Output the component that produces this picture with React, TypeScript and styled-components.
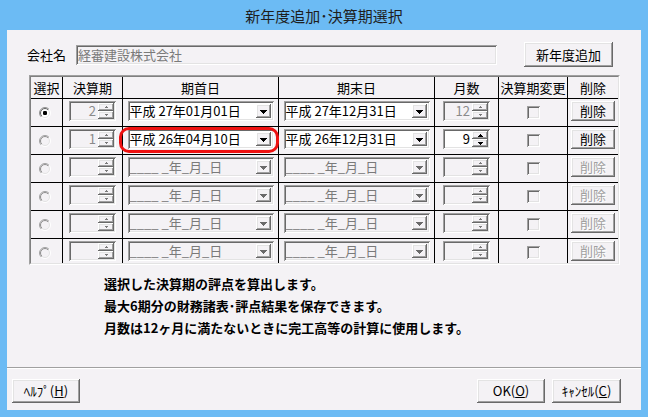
import React from 'react';
import styled, { createGlobalStyle } from 'styled-components';

const FACE = '#F4F2F5';
const BLUE = '#6CBBF4';

const raised = `box-shadow: inset -1px -1px #696969, inset 1px 1px #ffffff, inset -2px -2px #a0a0a0, inset 2px 2px #e3e3e3;`;
const sunken = `box-shadow: inset 1px 1px #a0a0a0, inset -1px -1px #ffffff, inset 2px 2px #696969, inset -2px -2px #e3e3e3;`;

const GlobalStyle = createGlobalStyle`
  html, body { margin: 0; padding: 0; }
  body {
    width: 648px;
    height: 417px;
    overflow: hidden;
    background: ${BLUE};
    font-family: "Noto Sans CJK JP", "Noto Sans", sans-serif;
  }
  * { box-sizing: border-box; }
`;

const Window = styled.div`
  width: 648px;
  height: 417px;
  background: ${BLUE};
  display: flex;
  flex-direction: column;
  padding: 0 7px 7px;
`;

const TitleBar = styled.div`
  height: 30px;
  display: flex;
  align-items: center;
  justify-content: center;
  font-size: 15px;
  color: #1e1e1e;
  padding-top: 1px;
`;

const Client = styled.div`
  flex: 1;
  background: ${FACE};
  display: flex;
  flex-direction: column;
  font-size: 13px;
  color: #000;
`;

const CompanyRow = styled.div`
  display: flex;
  align-items: center;
  height: 25px;
  margin-top: 12px;
  padding-left: 20px;
`;

const Label = styled.span`
  width: 49px;
  font-size: 13px;
  line-height: 16px;
`;

const TextField = styled.div`
  width: 421px;
  height: 20px;
  ${sunken}
  padding: 2px 2px;
  font-size: 13px;
  line-height: 16px;
  color: #7a7a7a;
  white-space: nowrap;
`;

const PushButton = styled.button<{ $w: number; $h: number; $off?: boolean }>`
  width: ${(p) => p.$w}px;
  height: ${(p) => p.$h}px;
  border: none;
  padding: 0;
  margin: 0;
  background: ${FACE};
  ${raised}
  font-family: inherit;
  font-size: 13px;
  line-height: 16px;
  color: ${(p) => (p.$off ? '#a0a0a0' : '#000')};
  text-shadow: ${(p) => (p.$off ? '1px 1px #ffffff' : 'none')};
  display: flex;
  align-items: center;
  justify-content: center;
  white-space: nowrap;
`;

const AddButton = styled(PushButton)`
  margin-left: 27px;
`;

const GridFrame = styled.div`
  margin: 8px 0 0 22px;
  width: 591px;
  height: 190px;
  border: 1px solid;
  border-color: #a0a0a0 #ffffff #ffffff #a0a0a0;
`;

const GridViewport = styled.div`
  position: relative;
  height: 188px;
  border: 1px solid;
  border-color: #808080 #e3e3e3 #e3e3e3 #808080;
  overflow: hidden;
`;

const Grid = styled.div`
  display: grid;
  grid-template-columns: 32px 60px 156px 156px 64px 69px 50px;
  grid-template-rows: 22px;
  grid-auto-rows: 28px;
`;

const HeadCell = styled.div<{ $last?: boolean }>`
  border-right: ${(p) => (p.$last ? 'none' : '1px solid #000')};
  border-bottom: 1px solid #000;
  display: flex;
  align-items: center;
  justify-content: center;
  font-size: 13px;
  line-height: 16px;
  white-space: nowrap;
`;

const Cell = styled.div<{ $last?: boolean; $shift?: number }>`
  border-right: ${(p) => (p.$last ? 'none' : '1px solid #000')};
  border-bottom: 1px solid #000;
  display: flex;
  align-items: flex-start;
  justify-content: center;
  padding-top: 2px;
  padding-right: ${(p) => p.$shift ?? 0}px;
`;

const RadioSvg = styled.svg`
  margin-top: 6px;
  display: block;
`;

const CheckBox = styled.span`
  display: block;
  width: 13px;
  height: 13px;
  margin-top: 5px;
  background: ${FACE};
  ${sunken}
`;

const SpinBox = styled.div<{ $on?: boolean }>`
  width: 47px;
  height: 20px;
  ${sunken}
  background: ${(p) => (p.$on ? '#ffffff' : FACE)};
  padding: 2px;
  display: flex;
`;

const SpinText = styled.span<{ $on?: boolean }>`
  flex: 1;
  text-align: right;
  padding-right: 2px;
  font-size: 13px;
  line-height: 16px;
  color: ${(p) => (p.$on ? '#000' : '#8a8a8a')};
`;

const SpinColumn = styled.div`
  width: 16px;
  display: flex;
  flex-direction: column;
`;

const SpinBtn = styled.div`
  flex: 1;
  background: ${FACE};
  ${raised}
  display: flex;
  align-items: center;
  justify-content: center;
`;

const Combo = styled.div<{ $on?: boolean }>`
  width: 146px;
  height: 20px;
  ${sunken}
  background: ${(p) => (p.$on ? '#ffffff' : FACE)};
  padding: 2px;
  display: flex;
  align-items: center;
`;

const ComboText = styled.span<{ $on?: boolean }>`
  flex: 1;
  font-size: 13px;
  line-height: 16px;
  white-space: nowrap;
  color: ${(p) => (p.$on ? '#000' : '#7a7a7a')};
`;

const DropBtn = styled.div`
  width: 15px;
  height: 14px;
  margin-right: 1px;
  background: ${FACE};
  ${raised}
  display: flex;
  align-items: center;
  justify-content: center;
  padding-top: 1px;
`;

const RedMark = styled.div`
  position: absolute;
  left: 88px;
  top: 50px;
  width: 160px;
  height: 26px;
  border: 3px solid #ee1111;
  border-radius: 10px;
  pointer-events: none;
`;

const Notes = styled.div`
  margin-top: 8px;
  padding-left: 97px;
  font-size: 13px;
  font-weight: 700;
  line-height: 22px;
`;

const Separator = styled.div`
  margin-top: auto;
  height: 2px;
  border-top: 1px solid #a0a0a0;
  border-bottom: 1px solid #ffffff;
`;

const Footer = styled.div`
  display: flex;
  align-items: center;
  height: 24px;
  margin: 10px 20px 7px 5px;
  gap: 7px;
`;

const Spacer = styled.div`
  flex: 1;
`;

const U = styled.span`
  text-decoration: underline;
  text-underline-offset: 1px;
`;

function Radio({ checked, id }: { checked?: boolean; id: string }) {
  const o1 = checked ? '#909090' : '#a0a0a0';
  const i1 = checked ? '#606060' : '#8c8c8c';
  return (
    <RadioSvg width="12" height="12" viewBox="0 0 12 12">
      <defs>
        <linearGradient id={`${id}o`} x1="0" y1="0" x2="1" y2="1">
          <stop offset="0.5" stopColor={o1} />
          <stop offset="0.5" stopColor="#ffffff" />
        </linearGradient>
        <linearGradient id={`${id}i`} x1="0" y1="0" x2="1" y2="1">
          <stop offset="0.5" stopColor={i1} />
          <stop offset="0.5" stopColor="#e3e3e3" />
        </linearGradient>
      </defs>
      <circle cx="6" cy="6" r="5.5" fill="none" stroke={`url(#${id}o)`} />
      <circle cx="6" cy="6" r="4.5" fill={checked ? '#ffffff' : FACE} stroke={`url(#${id}i)`} />
      {checked && <rect x="4" y="4" width="4" height="4" rx="1.2" fill="#000" />}
    </RadioSvg>
  );
}

function DownArrow({ on }: { on?: boolean }) {
  return (
    <svg width="7" height="4" viewBox="0 0 7 4" shapeRendering="crispEdges">
      <path d="M0 0h7v1H0zM1 1h5v1H1zM2 2h3v1H2zM3 3h1v1H3z" fill={on ? '#000' : '#6a6a6a'} />
    </svg>
  );
}

function SpinArrow({ up, on }: { up?: boolean; on?: boolean }) {
  if (on) {
    return (
      <svg width="5" height="3" viewBox="0 0 5 3" shapeRendering="crispEdges">
        <path d={up ? 'M2 0h1v1H2zM1 1h3v1H1zM0 2h5v1H0z' : 'M0 0h5v1H0zM1 1h3v1H1zM2 2h1v1H2z'} fill="#000" />
      </svg>
    );
  }
  return (
    <svg width="3" height="2" viewBox="0 0 3 2" shapeRendering="crispEdges">
      <path d={up ? 'M1 0h1v1H1zM0 1h3v1H0z' : 'M0 0h3v1H0zM1 1h1v1H1z'} fill="#7a7a7a" />
    </svg>
  );
}

function Spinner({ value, on }: { value: string; on?: boolean }) {
  return (
    <SpinBox $on={on}>
      <SpinText $on={on}>{value}</SpinText>
      <SpinColumn>
        <SpinBtn>
          <SpinArrow up on={on} />
        </SpinBtn>
        <SpinBtn>
          <SpinArrow on={on} />
        </SpinBtn>
      </SpinColumn>
    </SpinBox>
  );
}

function DateCombo({ text, on }: { text: string; on?: boolean }) {
  return (
    <Combo $on={on}>
      <ComboText $on={on}>{text}</ComboText>
      <DropBtn>
        <DownArrow on={on} />
      </DropBtn>
    </Combo>
  );
}

type Row = {
  checked?: boolean;
  period: string;
  start: string;
  end: string;
  months: string;
  monthsOn?: boolean;
  active: boolean;
};

const EMPTY_DATE = '____ _年_月_日';

const rows: Row[] = [
  { checked: true, period: '2', start: '平成 27年01月01日', end: '平成 27年12月31日', months: '12', active: true },
  { period: '1', start: '平成 26年04月10日', end: '平成 26年12月31日', months: '9', monthsOn: true, active: true },
  { period: '', start: EMPTY_DATE, end: EMPTY_DATE, months: '', active: false },
  { period: '', start: EMPTY_DATE, end: EMPTY_DATE, months: '', active: false },
  { period: '', start: EMPTY_DATE, end: EMPTY_DATE, months: '', active: false },
  { period: '', start: EMPTY_DATE, end: EMPTY_DATE, months: '', active: false },
];

const headers = ['選択', '決算期', '期首日', '期末日', '月数', '決算期変更', '削除'];

export default function App() {
  return (
    <>
      <GlobalStyle />
      <Window>
        <TitleBar>新年度追加･決算期選択</TitleBar>
        <Client>
          <CompanyRow>
            <Label>会社名</Label>
            <TextField>経審建設株式会社</TextField>
            <AddButton $w={89} $h={25}>新年度追加</AddButton>
          </CompanyRow>

          <GridFrame>
            <GridViewport>
              <Grid>
                {headers.map((h, i) => (
                  <HeadCell key={h} $last={i === headers.length - 1}>
                    {h}
                  </HeadCell>
                ))}
                {rows.map((r, i) => (
                  <React.Fragment key={i}>
                    <Cell $shift={3}>
                      <Radio checked={r.checked} id={`rad${i}`} />
                    </Cell>
                    <Cell>
                      <Spinner value={r.period} />
                    </Cell>
                    <Cell>
                      <DateCombo text={r.start} on={r.active} />
                    </Cell>
                    <Cell>
                      <DateCombo text={r.end} on={r.active} />
                    </Cell>
                    <Cell>
                      <Spinner value={r.months} on={r.monthsOn} />
                    </Cell>
                    <Cell>
                      <CheckBox />
                    </Cell>
                    <Cell $last>
                      <PushButton $w={44} $h={20} $off={!r.active}>
                        削除
                      </PushButton>
                    </Cell>
                  </React.Fragment>
                ))}
              </Grid>
              <RedMark />
            </GridViewport>
          </GridFrame>

          <Notes>
            <div>選択した決算期の評点を算出します。</div>
            <div>最大6期分の財務諸表･評点結果を保存できます。</div>
            <div>月数は12ヶ月に満たないときに完工高等の計算に使用します。</div>
          </Notes>

          <Separator />
          <Footer>
            <PushButton $w={68} $h={24}>
              ﾍﾙﾌﾟ(<U>H</U>)
            </PushButton>
            <Spacer />
            <PushButton $w={68} $h={24}>
              OK(<U>O</U>)
            </PushButton>
            <PushButton $w={69} $h={24}>
              ｷｬﾝｾﾙ(<U>C</U>)
            </PushButton>
          </Footer>
        </Client>
      </Window>
    </>
  );
}
